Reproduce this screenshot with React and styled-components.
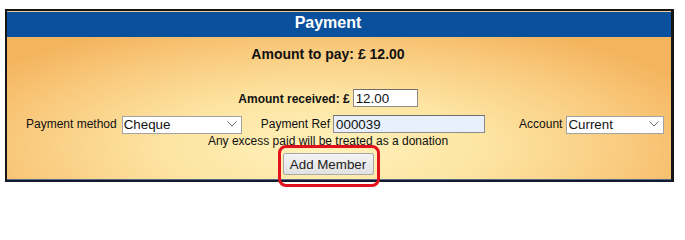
import styled, { createGlobalStyle } from "styled-components";

const GlobalStyle = createGlobalStyle`
  body {
    margin: 0;
    background: #fff;
    font-family: "Liberation Sans", Arial, sans-serif;
  }
`;

const Page = styled.div`
  width: 685px;
  height: 202px;
  box-sizing: border-box;
  padding: 9px 0 0 5px;
`;

const Panel = styled.div`
  width: 669px;
  box-sizing: border-box;
  border: 2px solid #151515;
  border-right-width: 3px;
  border-bottom: 3px solid #121a2c;
  padding-top: 1px;
  background: #e6cf9b;
`;

const Header = styled.div`
  height: 25px;
  box-sizing: border-box;
  background: #0a509d;
  color: #fff;
  font-size: 16px;
  font-weight: bold;
  line-height: 22px;
  padding: 0 22px 3px 0;
  text-align: center;
`;

const Body = styled.div`
  display: flex;
  flex-direction: column;
  align-items: center;
  padding: 9px 22px 4px 0;
  border-bottom: 1px solid #5b6b8c;
  margin-bottom: -1px;
  background: radial-gradient(
    ellipse 62% 95% at 48% 78%,
    #fff2bb 0%,
    #fde4a2 40%,
    #f9c97c 75%,
    #f4b45e 100%
  );
`;

const Title = styled.div`
  font-size: 14px;
  font-weight: bold;
  line-height: 16px;
  color: #111;
`;

const AmountRow = styled.div`
  display: flex;
  align-items: center;
  gap: 3px;
  margin-top: 27px;
`;

const BoldLabel = styled.span`
  font-size: 12px;
  font-weight: bold;
  color: #111;
  padding-top: 2px;
`;

const TextInput = styled.input`
  width: ${(p) => p.$w}px;
  height: 18px;
  box-sizing: border-box;
  margin: 0;
  padding: 0 2px;
  border: 1px solid #8c8c8c;
  border-top-color: #6e6e6e;
  background: ${(p) => p.$bg || "#fff"};
  font-family: inherit;
  font-size: 13.33px;
  color: #111;
  outline: none;
`;

const MethodRow = styled.div`
  align-self: stretch;
  margin: 8px -22px 0 0;
  padding-left: 19px;
  display: flex;
  align-items: center;
  height: 18px;
`;

const Field = styled.label`
  display: flex;
  align-items: center;
  gap: ${(p) => p.$gap}px;
  margin-left: ${(p) => p.$ml || 0}px;
`;

const Label = styled.span`
  font-size: 12px;
  color: #111;
`;

const SelectBox = styled.span`
  position: relative;
  display: inline-block;
  width: ${(p) => p.$w}px;
  height: 18px;
`;

const Select = styled.select`
  appearance: none;
  width: 100%;
  height: 18px;
  box-sizing: border-box;
  margin: 0;
  padding: 0 0 0 1px;
  border: 1px solid #a3a3a3;
  background: #fff;
  font-family: inherit;
  font-size: 13.33px;
  color: #111;
  outline: none;
`;

const Chevron = styled.svg`
  position: absolute;
  right: 5px;
  top: 6px;
  pointer-events: none;
`;

const Note = styled.div`
  margin-top: 1px;
  font-size: 12px;
  line-height: 14px;
  color: #111;
`;

const ButtonWrap = styled.span`
  position: relative;
  margin-top: 5px;
  display: inline-block;
`;

const Button = styled.button`
  width: 91px;
  height: 22px;
  margin: 0;
  padding: 0;
  border: 1px solid #a8a8a8;
  border-radius: 2px;
  background: linear-gradient(#f3f3f3, #e1e1e1);
  font-family: inherit;
  font-size: 13.33px;
  color: #222;
`;

const Highlight = styled.span`
  position: absolute;
  left: -5px;
  right: -6px;
  top: -8px;
  bottom: -12px;
  border: 3px solid #e2121c;
  border-radius: 8px;
  pointer-events: none;
`;

function Dropdown({ width, value, options }) {
  return (
    <SelectBox $w={width}>
      <Select defaultValue={value}>
        {options.map((o) => (
          <option key={o}>{o}</option>
        ))}
      </Select>
      <Chevron width="10" height="6" viewBox="0 0 10 6">
        <polyline points="0.5,0.5 5,5 9.5,0.5" fill="none" stroke="#6b6b6b" strokeWidth="1" />
      </Chevron>
    </SelectBox>
  );
}

export default function App() {
  return (
    <Page>
      <GlobalStyle />
      <Panel>
        <Header>Payment</Header>
        <Body>
          <Title>Amount to pay: £ 12.00</Title>

          <AmountRow>
            <BoldLabel>Amount received: £</BoldLabel>
            <TextInput $w={65} defaultValue="12.00" />
          </AmountRow>

          <MethodRow>
            <Field $gap={5}>
              <Label>Payment method</Label>
              <Dropdown width={120} value="Cheque" options={["Cheque", "Cash", "Card", "Bank transfer"]} />
            </Field>
            <Field $gap={3} $ml={19}>
              <Label>Payment Ref</Label>
              <TextInput $w={152} $bg="#e8f0fe" defaultValue="000039" />
            </Field>
            <Field $gap={4} $ml={34}>
              <Label>Account</Label>
              <Dropdown width={98} value="Current" options={["Current", "Savings"]} />
            </Field>
          </MethodRow>

          <Note>Any excess paid will be treated as a donation</Note>

          <ButtonWrap>
            <Button type="button">Add Member</Button>
            <Highlight />
          </ButtonWrap>
        </Body>
      </Panel>
    </Page>
  );
}
